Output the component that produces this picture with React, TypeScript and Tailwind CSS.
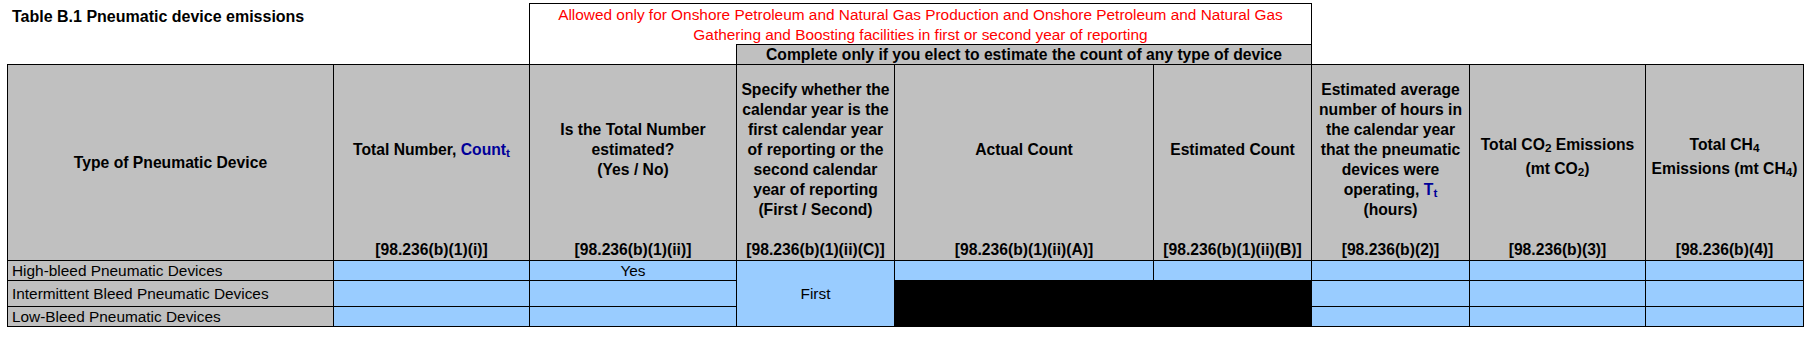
import React from "react";

const GRAY = "bg-[#c0c0c0]";
const BLUE = "bg-[#99ccff]";

function Head({
  children,
  refText,
  pad = "pb-[6px]",
}: {
  children: React.ReactNode;
  refText?: string;
  pad?: string;
}) {
  return (
    <div className={`${GRAY} flex flex-col font-bold text-[15.7px] leading-[20px] text-black`}>
      <div className={`flex-1 flex items-center justify-center text-center whitespace-nowrap ${pad}`}>
        <div>{children}</div>
      </div>
      {refText ? (
        <div className="h-[20px] text-center whitespace-nowrap">{refText}</div>
      ) : null}
    </div>
  );
}

function Label({ children }: { children: React.ReactNode }) {
  return (
    <div className={`${GRAY} flex items-center pl-[4px] pt-px text-[15.4px] leading-[18px] whitespace-nowrap`}>
      {children}
    </div>
  );
}

function Blue({ children }: { children?: React.ReactNode }) {
  return (
    <div className={`${BLUE} flex items-center justify-center pt-px text-[15.4px] leading-[18px]`}>
      {children}
    </div>
  );
}

export default function App() {
  return (
    <div className="w-[1810px] h-[337px] bg-white text-black font-['Liberation_Sans',Arial,sans-serif] overflow-hidden">
      <div className="flex">
        <div className="w-[529px] pl-[12px] pt-[7px] font-bold text-[16px] leading-[20px] whitespace-nowrap">
          Table B.1 Pneumatic device emissions
        </div>
        <div className="w-[783px] mt-[3px] border-l border-t border-r border-black flex flex-col">
          <div className="h-[40px] pt-px text-center text-[#ff0000] text-[15.4px] leading-[20px]">
            Allowed only for Onshore Petroleum and Natural Gas Production and Onshore Petroleum and Natural Gas
            <br />
            Gathering and Boosting facilities in first or second year of reporting
          </div>
          <div className="flex h-[20px]">
            <div className="w-[206px]" />
            <div className={`flex-1 ${GRAY} border-t border-l border-black text-center font-bold text-[15.7px] leading-[19px] whitespace-nowrap`}>
              Complete only if you elect to estimate the count of any type of device
            </div>
          </div>
        </div>
      </div>

      <div className="ml-[7px] w-fit grid grid-cols-[325px_195px_206px_157px_258px_157px_157px_175px_157px] grid-rows-[195px_19px_25px_19px] gap-px p-px bg-black">
        <Head pad="">Type of Pneumatic Device</Head>
        <Head refText="[98.236(b)(1)(i)]">
          Total Number, <span className="text-[#000099]">Count<sub>t</sub></span>
        </Head>
        <Head refText="[98.236(b)(1)(ii)]">
          Is the Total Number
          <br />
          estimated?
          <br />
          (Yes / No)
        </Head>
        <Head refText="[98.236(b)(1)(ii)(C)]">
          Specify whether the
          <br />
          calendar year is the
          <br />
          first calendar year
          <br />
          of reporting or the
          <br />
          second calendar
          <br />
          year of reporting
          <br />
          (First / Second)
        </Head>
        <Head refText="[98.236(b)(1)(ii)(A)]">Actual Count</Head>
        <Head refText="[98.236(b)(1)(ii)(B)]">Estimated Count</Head>
        <Head refText="[98.236(b)(2)]">
          Estimated average
          <br />
          number of hours in
          <br />
          the calendar year
          <br />
          that the pneumatic
          <br />
          devices were
          <br />
          operating, <span className="text-[#000099]">T<sub>t</sub></span>
          <br />
          (hours)
        </Head>
        <Head refText="[98.236(b)(3)]" pad="pt-[8px]">
          <div className="leading-[24px]">
            Total CO<sub>2</sub> Emissions
            <br />
            (mt CO<sub>2</sub>)
          </div>
        </Head>
        <Head refText="[98.236(b)(4)]" pad="pt-[8px]">
          <div className="leading-[24px]">
            Total CH<sub>4</sub>
            <br />
            Emissions (mt CH<sub>4</sub>)
          </div>
        </Head>

        <Label>High-bleed Pneumatic Devices</Label>
        <Blue />
        <Blue>Yes</Blue>
        <div className={`${BLUE} row-span-3 flex items-center justify-center text-[15.4px] leading-[18px]`}>
          First
        </div>
        <Blue />
        <Blue />
        <Blue />
        <Blue />
        <Blue />

        <Label>Intermittent Bleed Pneumatic Devices</Label>
        <Blue />
        <Blue />
        <div className="col-span-2 row-span-2 bg-black" />
        <Blue />
        <Blue />
        <Blue />

        <Label>Low-Bleed Pneumatic Devices</Label>
        <Blue />
        <Blue />
        <Blue />
        <Blue />
        <Blue />
      </div>
    </div>
  );
}
